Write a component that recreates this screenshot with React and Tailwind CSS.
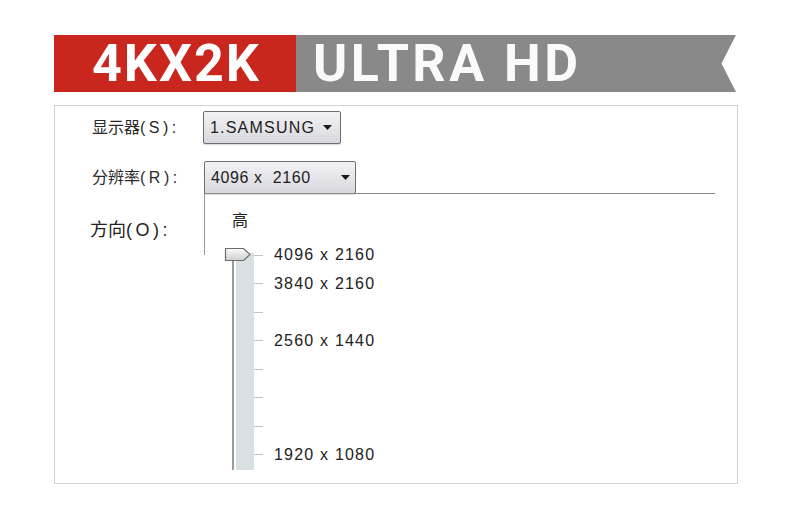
import React from "react";

const font = { fontFamily: '"Liberation Sans", "Noto Sans CJK SC", sans-serif' };

const ticks = ["4096 x 2160", "3840 x 2160", "", "2560 x 1440", "", "", "", "1920 x 1080"];

function Caret() {
  return (
    <svg width="9" height="5" viewBox="0 0 9 5" className="shrink-0">
      <path d="M0 0 L9 0 L4.5 5 Z" fill="#1a1a1a" />
    </svg>
  );
}

function Select({ value, width, gap, track }) {
  return (
    <div
      className={`flex h-[33px] items-center rounded-[2px] border border-[#6f6f73] bg-gradient-to-b from-[#f3f2f6] to-[#d9d8de] pl-[6px] text-[16px] text-[#1e1e1e] shadow-[0_1px_1px_rgba(0,0,0,0.15)] ${width}`}
    >
      <span className={`whitespace-pre ${track}`}>{value}</span>
      <span className={gap}>
        <Caret />
      </span>
    </div>
  );
}

function Thumb() {
  return (
    <svg width="28" height="15" viewBox="0 0 28 15" className="absolute left-0 top-[7px]">
      <defs>
        <linearGradient id="tg" x1="0" y1="0" x2="0" y2="1">
          <stop offset="0" stopColor="#fbfbfb" />
          <stop offset="0.5" stopColor="#e4e4e4" />
          <stop offset="1" stopColor="#cfcfcf" />
        </linearGradient>
      </defs>
      <path d="M1.5 1.5 H19.5 L26 7.5 L19.5 13.5 H1.5 Z" fill="url(#tg)" stroke="#6d6d6d" strokeWidth="1.2" />
    </svg>
  );
}

export default function App() {
  return (
    <div className="min-h-[524px] w-[790px] bg-white pt-[35px]" style={font}>
      {/* banner */}
      <div className="ml-[54px] flex h-[57px] w-[682px] font-['Roboto',sans-serif]">
        <div className="flex w-[242px] items-center bg-[#c9261d] pl-[38px]">
          <span className="text-[52px] font-bold leading-none tracking-[2px] text-white">4KX2K</span>
        </div>
        <div className="flex flex-1 items-center bg-[#898989] pl-[17px] [clip-path:polygon(0_0,100%_0,96.7%_50%,100%_100%,0_100%)]">
          <span className="whitespace-pre text-[52px] font-bold leading-none tracking-[3.5px] text-[#fafafa]">ULTRA HD</span>
        </div>
      </div>

      {/* settings panel */}
      <div className="ml-[54px] mt-[13px] h-[379px] w-[684px] border border-[#d2d2d2] pl-[37px] pt-[5px]">
        <div className="flex items-center">
          <div className="w-[111px] text-[16px] text-[#2a2a2a]">
            显示器<span className="tracking-[3.5px]">(S):</span>
          </div>
          <Select value="1.SAMSUNG" width="w-[138px]" gap="ml-[8px]" track="tracking-[1.2px]" />
        </div>

        <div className="mt-[17px] flex items-center">
          <div className="w-[112px] text-[16px] text-[#2a2a2a]">
            分辨率<span className="tracking-[3.5px]">(R):</span>
          </div>
          <Select value="4096 x  2160" width="w-[152px]" gap="ml-[30px]" track="tracking-[0.6px]" />
        </div>

        <div className="flex">
          <div className="-ml-[2px] w-[114px] pt-[25px] text-[18px] leading-[22px] text-[#222]">
            方向<span className="tracking-[3.5px]">(O):</span>
          </div>
          <div className="-mt-px flex w-[511px] border-t border-[#8a8a8a]">
            <div className="h-[61px] w-px bg-[#9a9a9a]" />
            <div className="pl-[19px] pt-[17px]">
              <div className="ml-[8px] text-[16px] leading-[20px] text-[#222]">高</div>
              <div className="mt-[9px] flex">
                <div className="relative h-[230px] w-[30px]">
                  <div className="absolute left-[8px] top-[20px] h-[210px] w-[2px] bg-[#9c9c9c]" />
                  <div className="absolute left-[12px] top-[13px] h-[217px] w-[18px] bg-[#d8e0e4]" />
                  <Thumb />
                </div>
                <div className="mt-[1px] flex flex-col">
                  {ticks.map((t, i) => (
                    <div key={i} className="flex h-[28.5px] items-center">
                      <div className="h-px w-[9px] bg-[#c4c4c4]" />
                      {t && (
                        <span className="ml-[11px] text-[16px] tracking-[1.2px] text-[#222]">{t}</span>
                      )}
                    </div>
                  ))}
                </div>
              </div>
            </div>
          </div>
        </div>
      </div>
    </div>
  );
}
